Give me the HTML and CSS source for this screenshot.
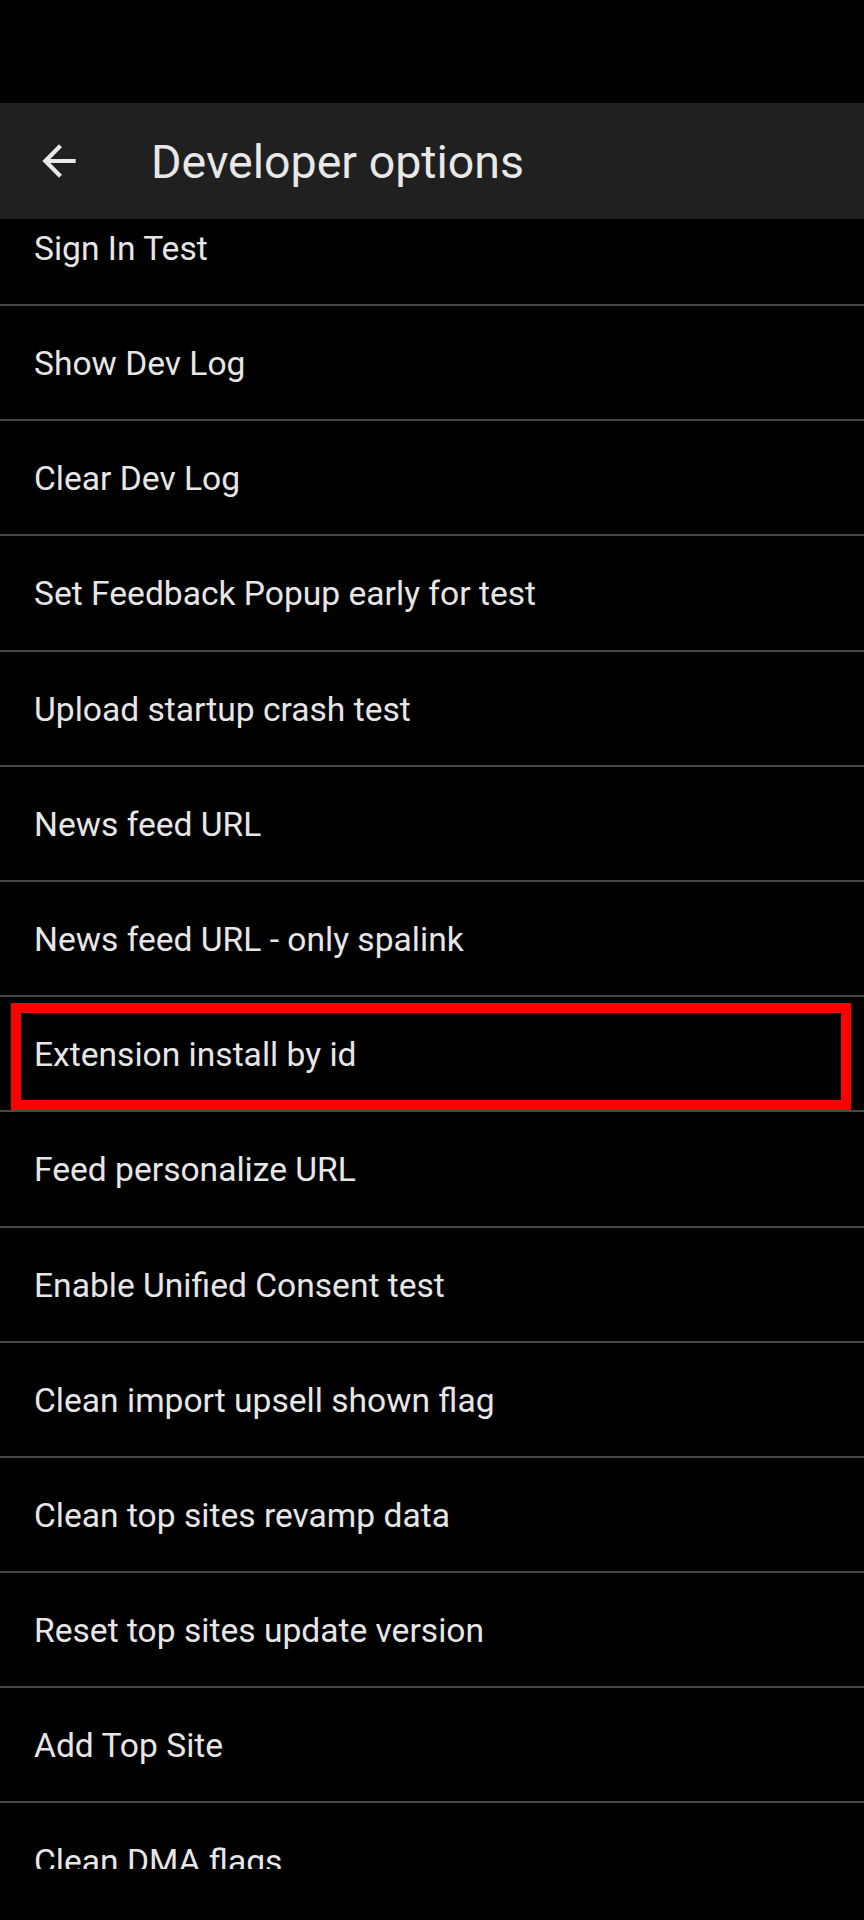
FILE: index.html
```html
<!DOCTYPE html>
<html>
<head>
<meta charset="utf-8">
<link rel="stylesheet" href="styles.css">
</head>
<body>
<div class="screen">
  <div class="statusbar"></div>
  <header class="toolbar">
    <svg class="back" viewBox="0 0 24 24" aria-hidden="true"><path d="M20 11H7.83l5.59-5.59L12 4l-8 8 8 8 1.41-1.41L7.83 13H20v-2z"/></svg>
    <h1 class="title">Developer options</h1>
  </header>
  <main class="list-viewport">
    <ul class="list">
      <li class="row">Sign In Test</li>
      <li class="row">Show Dev Log</li>
      <li class="row">Clear Dev Log</li>
      <li class="row">Set Feedback Popup early for test</li>
      <li class="row">Upload startup crash test</li>
      <li class="row">News feed URL</li>
      <li class="row">News feed URL - only spalink</li>
      <li class="row highlighted">Extension install by id<span class="mark"></span></li>
      <li class="row">Feed personalize URL</li>
      <li class="row">Enable Unified Consent test</li>
      <li class="row">Clean import upsell shown flag</li>
      <li class="row">Clean top sites revamp data</li>
      <li class="row">Reset top sites update version</li>
      <li class="row">Add Top Site</li>
      <li class="row">Clean DMA flags</li>
    </ul>
  </main>
</div>
</body>
</html>
```
FILE: styles.css
```css
html, body {
  margin: 0;
  padding: 0;
  background: #000;
}
body {
  width: 864px;
  height: 1920px;
  overflow: hidden;
  font-family: Roboto, "Noto Sans", "Liberation Sans", sans-serif;
  color: #e6e6e6;
}
.screen {
  display: flex;
  flex-direction: column;
}
.statusbar {
  height: 103px;
  background: #000;
}
.toolbar {
  height: 116px;
  background: #202020;
  display: flex;
  align-items: center;
  padding-left: 34px;
  box-sizing: border-box;
}
.back {
  width: 50px;
  height: 50px;
  fill: #e8e8e8;
  flex: none;
}
.title {
  margin: 0 0 0 67px;
  padding-top: 2px;
  font-size: 46.5px;
  font-weight: 400;
  color: #e8e8e8;
  letter-spacing: 0;
}
.list-viewport {
  height: 1650px;
  overflow: hidden;
}
.list {
  list-style: none;
  margin: -28.2px 0 0 0;
  padding: 0;
}
.row {
  position: relative;
  height: 115.2px;
  box-sizing: border-box;
  border-bottom: 2px solid #484848;
  display: flex;
  align-items: center;
  padding: 2px 0 0 34px;
  font-size: 33.6px;
  color: #e6e6e6;
}
.mark {
  position: absolute;
  left: 11px;
  right: 13px;
  top: 6px;
  bottom: 0;
  border: 10px solid #ff0000;
}
```
